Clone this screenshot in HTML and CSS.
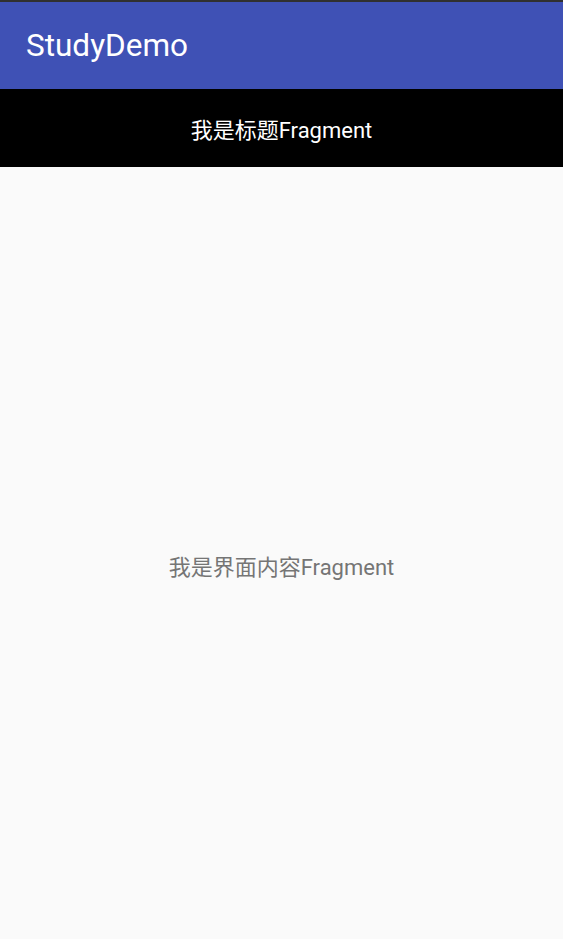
FILE: index.html
```html
<!DOCTYPE html>
<html lang="zh">
<head>
<meta charset="utf-8">
<link rel="stylesheet" href="styles.css">
</head>
<body>
<div class="status"></div>
<header class="appbar"><span class="title">StudyDemo</span></header>
<section class="titlefrag"><span>我是标题Fragment</span></section>
<main class="content"><span>我是界面内容Fragment</span></main>
</body>
</html>
```
FILE: styles.css
```css
html, body { margin: 0; padding: 0; }
body {
  width: 563px;
  height: 939px;
  display: flex;
  flex-direction: column;
  background: #fafafa;
  font-family: Roboto, "Noto Sans CJK SC", sans-serif;
  overflow: hidden;
}
.status { height: 2px; background: #303030; }
.appbar {
  height: 87px;
  background: #3f51b5;
  display: flex;
  align-items: center;
  padding-left: 26px;
  box-sizing: border-box;
}
.title { color: #fff; font-size: 31.5px; line-height: 1; }
.titlefrag {
  height: 78px;
  background: #000;
  color: #fff;
  font-size: 22px;
  display: flex;
  align-items: center;
  justify-content: center;
}
.content {
  flex: 1;
  display: flex;
  align-items: center;
  justify-content: center;
  padding-top: 24px;
  color: #757575;
  font-size: 22px;
}
```
